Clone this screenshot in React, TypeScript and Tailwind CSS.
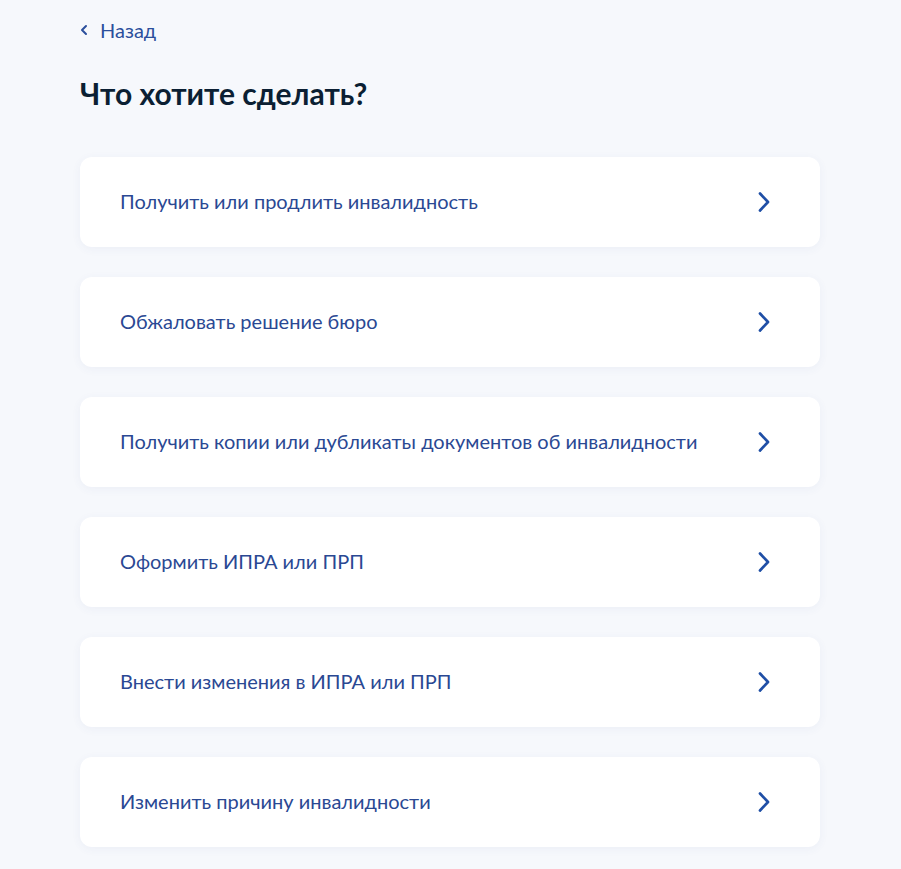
const items = [
  'Получить или продлить инвалидность',
  'Обжаловать решение бюро',
  'Получить копии или дубликаты документов об инвалидности',
  'Оформить ИПРА или ПРП',
  'Внести изменения в ИПРА или ПРП',
  'Изменить причину инвалидности',
]

function Chevron() {
  return (
    <svg width="16" height="22" viewBox="0 0 16 22" fill="none">
      <path d="M4 2.5 L12 11 L4 19.5" stroke="#1f4fa6" strokeWidth="2.7" strokeLinecap="round" strokeLinejoin="round" />
    </svg>
  )
}

export default function App() {
  return (
    <div className="min-h-[869px] bg-[#f6f8fc] font-['Lato',sans-serif]">
      <div className="px-[80px] w-[900px]">
        <a className="flex items-center gap-[11px] pt-[18px] text-[20px] leading-[24px] text-[#2b4f9c]">
          <svg width="9" height="14" viewBox="0 0 9 14" fill="none">
            <path d="M6 3 L2 7 L6 11" stroke="#2b4f9c" strokeWidth="2" strokeLinecap="round" strokeLinejoin="round" />
          </svg>
          Назад
        </a>
        <h1 className="mt-[33px] text-[30px] leading-[36px] font-bold text-[#0b1f33]">Что хотите сделать?</h1>
        <div className="mt-[46px] flex flex-col gap-[30px] w-[740px]">
          {items.map((t) => (
            <div
              key={t}
              className="flex h-[90px] items-center justify-between rounded-[12px] bg-white pl-[40px] pr-[48px] shadow-[0_2px_10px_rgba(66,88,158,0.06)]"
            >
              <span className="pb-[3px] text-[20px] leading-[24px] text-[#2a4893]">{t}</span>
              <Chevron />
            </div>
          ))}
        </div>
      </div>
    </div>
  )
}
